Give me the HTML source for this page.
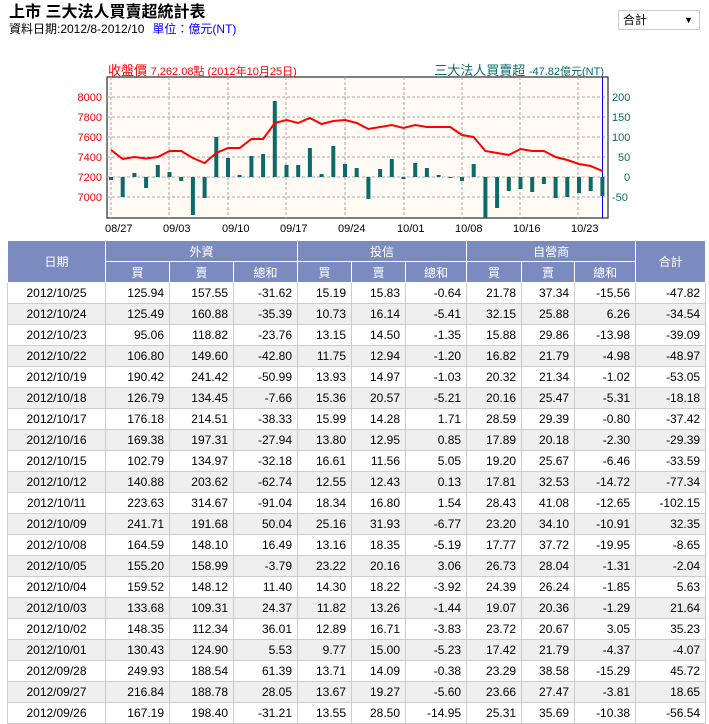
<!DOCTYPE html><html><head><meta charset="utf-8"><style>
body{margin:0;width:709px;height:722px;overflow:hidden;background:#fff;font-family:"Liberation Sans","Noto Sans CJK TC",sans-serif;font-size:12px;color:#000;position:relative}
.t{position:absolute;left:9px;top:3px;font-size:16px;line-height:20px;font-weight:bold}
.s{position:absolute;left:9px;top:22px;font-size:12px;line-height:15px}
.s span{color:#00f;margin-left:8px}
.sel{position:absolute;left:618px;top:10px;width:82px;height:20px;border:1px solid #ccc;box-sizing:border-box;font-size:12px;line-height:18px;padding-left:4px}
.sel i{position:absolute;right:6px;top:0;font-style:normal;font-size:9px}
svg{position:absolute;left:0;top:0}
table{position:absolute;left:7px;top:240px;border-collapse:collapse;width:698px;table-layout:fixed}
td,th{border:1px solid #ccc;height:20px;padding:0 5px 0 0;font-weight:normal;font-size:12px}
th{background:#7b8bc0;color:#fff;text-align:center;padding:0;border-color:#fff}
td{text-align:right}
td:first-child{text-align:center;padding:0}
tr.a td{background:#efefef}
</style></head><body>
<div class="t">上市 三大法人買賣超統計表</div>
<div class="s">資料日期:2012/8-2012/10<span>單位：億元(NT)</span></div>
<div class="sel">合計<i>▼</i></div>
<svg width="709" height="240" font-family="Liberation Sans,Noto Sans CJK TC,sans-serif">
<rect x="107" y="77" width="501" height="141" fill="#fffaf3" stroke="#000"/>
<g stroke="#aaa" stroke-dasharray="3,2">
<line x1="107" x2="608" y1="97" y2="97"/><line x1="107" x2="608" y1="117" y2="117"/><line x1="107" x2="608" y1="137" y2="137"/><line x1="107" x2="608" y1="157" y2="157"/><line x1="107" x2="608" y1="177" y2="177"/><line x1="107" x2="608" y1="197" y2="197"/>
<line x1="111" x2="111" y1="77" y2="218"/><line x1="169" x2="169" y1="77" y2="218"/><line x1="228" x2="228" y1="77" y2="218"/><line x1="286" x2="286" y1="77" y2="218"/><line x1="345" x2="345" y1="77" y2="218"/><line x1="404" x2="404" y1="77" y2="218"/><line x1="462" x2="462" y1="77" y2="218"/><line x1="520" x2="520" y1="77" y2="218"/><line x1="578" x2="578" y1="77" y2="218"/>
</g>
<line x1="602.5" x2="602.5" y1="77" y2="218" stroke="#00f"/>
<g fill="#0b6b68">
<rect x="109" y="177" width="4" height="3"/><rect x="120.7" y="177" width="4" height="20"/><rect x="132.4" y="173" width="4" height="4"/><rect x="144.1" y="177" width="4" height="11"/><rect x="155.8" y="165" width="4" height="12"/><rect x="167.5" y="172" width="4" height="5"/><rect x="179.2" y="177" width="4" height="4"/><rect x="190.9" y="177" width="4" height="38"/><rect x="202.6" y="177" width="4" height="21"/><rect x="214.3" y="137" width="4" height="40"/><rect x="226" y="158" width="4" height="19"/><rect x="237.7" y="175" width="4" height="2"/><rect x="249.4" y="156" width="4" height="21"/><rect x="261.1" y="154" width="4" height="23"/><rect x="272.8" y="101" width="4" height="76"/><rect x="284.5" y="165" width="4" height="12"/><rect x="296.2" y="165" width="4" height="12"/><rect x="307.9" y="148" width="4" height="29"/><rect x="319.6" y="174" width="4" height="3"/><rect x="331.3" y="146" width="4" height="31"/><rect x="343" y="164" width="4" height="13"/><rect x="354.7" y="168" width="4" height="9"/><rect x="366.4" y="177" width="4" height="22"/><rect x="378.1" y="169" width="4" height="8"/><rect x="389.8" y="159" width="4" height="18"/><rect x="401.5" y="177" width="4" height="2"/><rect x="413.2" y="163" width="4" height="14"/><rect x="424.9" y="168" width="4" height="9"/><rect x="436.6" y="175" width="4" height="2"/><rect x="448.3" y="177" width="4" height="1"/><rect x="460" y="177" width="4" height="4"/><rect x="471.7" y="164" width="4" height="13"/><rect x="483.4" y="177" width="4" height="41"/><rect x="495.1" y="177" width="4" height="31"/><rect x="506.8" y="177" width="4" height="14"/><rect x="518.5" y="177" width="4" height="12"/><rect x="530.2" y="177" width="4" height="15"/><rect x="541.9" y="177" width="4" height="7"/><rect x="553.6" y="177" width="4" height="21"/><rect x="565.3" y="177" width="4" height="20"/><rect x="577" y="177" width="4" height="16"/><rect x="588.7" y="177" width="4" height="14"/><rect x="600.4" y="177" width="4" height="19"/>
</g>
<polyline fill="none" stroke="#f00" stroke-width="2" points="111,150 122.7,159 134.4,157 146.1,158.5 157.8,157 169.5,151 181.2,151 192.9,158 204.6,163 216.3,153 228,148 239.7,148 251.4,139 263.1,139 274.8,123 286.5,120 298.2,123 309.9,118 321.6,124 333.3,121 345,120 356.7,123 368.4,129 380.1,127 391.8,125 403.5,128 415.2,125 426.9,127 438.6,127 450.3,127 462,135 473.7,137 485.4,151 497.1,153 508.8,155 520.5,149 532.2,151 543.9,151 555.6,157 567.3,160 579,164 590.7,166 602.4,171"/>
<text x="108" y="75" fill="#f00" font-size="13">收盤價 <tspan font-size="11">7,262.08點 (2012年10月25日)</tspan></text>
<text x="604" y="75" fill="#0b6b68" font-size="13" text-anchor="end">三大法人買賣超 <tspan font-size="11">-47.82億元(NT)</tspan></text>
<g fill="#f00" font-size="11" text-anchor="end"><text x="102" y="101">8000</text><text x="102" y="121">7800</text><text x="102" y="141">7600</text><text x="102" y="161">7400</text><text x="102" y="181">7200</text><text x="102" y="201">7000</text></g>
<g fill="#0b6b68" font-size="11"><text x="612" y="101">200</text><text x="612" y="121">150</text><text x="612" y="141">100</text><text x="618" y="161">50</text><text x="624" y="181">0</text><text x="612" y="201">-50</text></g>
<g font-size="11"><text x="105" y="232">08/27</text><text x="163" y="232">09/03</text><text x="222" y="232">09/10</text><text x="280" y="232">09/17</text><text x="338" y="232">09/24</text><text x="397" y="232">10/01</text><text x="455" y="232">10/08</text><text x="513" y="232">10/16</text><text x="571" y="232">10/23</text></g>
</svg>
<table>
<colgroup><col style="width:98px"><col style="width:64px"><col style="width:64px"><col style="width:64px"><col style="width:54px"><col style="width:54px"><col style="width:61px"><col style="width:55px"><col style="width:53px"><col style="width:61px"><col style="width:70px"></colgroup>
<tr><th rowspan="2">日期</th><th colspan="3">外資</th><th colspan="3">投信</th><th colspan="3">自營商</th><th rowspan="2">合計</th></tr>
<tr><th>買</th><th>賣</th><th>總和</th><th>買</th><th>賣</th><th>總和</th><th>買</th><th>賣</th><th>總和</th></tr>
<tr><td>2012/10/25</td><td>125.94</td><td>157.55</td><td>-31.62</td><td>15.19</td><td>15.83</td><td>-0.64</td><td>21.78</td><td>37.34</td><td>-15.56</td><td>-47.82</td></tr>
<tr class="a"><td>2012/10/24</td><td>125.49</td><td>160.88</td><td>-35.39</td><td>10.73</td><td>16.14</td><td>-5.41</td><td>32.15</td><td>25.88</td><td>6.26</td><td>-34.54</td></tr>
<tr><td>2012/10/23</td><td>95.06</td><td>118.82</td><td>-23.76</td><td>13.15</td><td>14.50</td><td>-1.35</td><td>15.88</td><td>29.86</td><td>-13.98</td><td>-39.09</td></tr>
<tr class="a"><td>2012/10/22</td><td>106.80</td><td>149.60</td><td>-42.80</td><td>11.75</td><td>12.94</td><td>-1.20</td><td>16.82</td><td>21.79</td><td>-4.98</td><td>-48.97</td></tr>
<tr><td>2012/10/19</td><td>190.42</td><td>241.42</td><td>-50.99</td><td>13.93</td><td>14.97</td><td>-1.03</td><td>20.32</td><td>21.34</td><td>-1.02</td><td>-53.05</td></tr>
<tr class="a"><td>2012/10/18</td><td>126.79</td><td>134.45</td><td>-7.66</td><td>15.36</td><td>20.57</td><td>-5.21</td><td>20.16</td><td>25.47</td><td>-5.31</td><td>-18.18</td></tr>
<tr><td>2012/10/17</td><td>176.18</td><td>214.51</td><td>-38.33</td><td>15.99</td><td>14.28</td><td>1.71</td><td>28.59</td><td>29.39</td><td>-0.80</td><td>-37.42</td></tr>
<tr class="a"><td>2012/10/16</td><td>169.38</td><td>197.31</td><td>-27.94</td><td>13.80</td><td>12.95</td><td>0.85</td><td>17.89</td><td>20.18</td><td>-2.30</td><td>-29.39</td></tr>
<tr><td>2012/10/15</td><td>102.79</td><td>134.97</td><td>-32.18</td><td>16.61</td><td>11.56</td><td>5.05</td><td>19.20</td><td>25.67</td><td>-6.46</td><td>-33.59</td></tr>
<tr class="a"><td>2012/10/12</td><td>140.88</td><td>203.62</td><td>-62.74</td><td>12.55</td><td>12.43</td><td>0.13</td><td>17.81</td><td>32.53</td><td>-14.72</td><td>-77.34</td></tr>
<tr><td>2012/10/11</td><td>223.63</td><td>314.67</td><td>-91.04</td><td>18.34</td><td>16.80</td><td>1.54</td><td>28.43</td><td>41.08</td><td>-12.65</td><td>-102.15</td></tr>
<tr class="a"><td>2012/10/09</td><td>241.71</td><td>191.68</td><td>50.04</td><td>25.16</td><td>31.93</td><td>-6.77</td><td>23.20</td><td>34.10</td><td>-10.91</td><td>32.35</td></tr>
<tr><td>2012/10/08</td><td>164.59</td><td>148.10</td><td>16.49</td><td>13.16</td><td>18.35</td><td>-5.19</td><td>17.77</td><td>37.72</td><td>-19.95</td><td>-8.65</td></tr>
<tr class="a"><td>2012/10/05</td><td>155.20</td><td>158.99</td><td>-3.79</td><td>23.22</td><td>20.16</td><td>3.06</td><td>26.73</td><td>28.04</td><td>-1.31</td><td>-2.04</td></tr>
<tr><td>2012/10/04</td><td>159.52</td><td>148.12</td><td>11.40</td><td>14.30</td><td>18.22</td><td>-3.92</td><td>24.39</td><td>26.24</td><td>-1.85</td><td>5.63</td></tr>
<tr class="a"><td>2012/10/03</td><td>133.68</td><td>109.31</td><td>24.37</td><td>11.82</td><td>13.26</td><td>-1.44</td><td>19.07</td><td>20.36</td><td>-1.29</td><td>21.64</td></tr>
<tr><td>2012/10/02</td><td>148.35</td><td>112.34</td><td>36.01</td><td>12.89</td><td>16.71</td><td>-3.83</td><td>23.72</td><td>20.67</td><td>3.05</td><td>35.23</td></tr>
<tr class="a"><td>2012/10/01</td><td>130.43</td><td>124.90</td><td>5.53</td><td>9.77</td><td>15.00</td><td>-5.23</td><td>17.42</td><td>21.79</td><td>-4.37</td><td>-4.07</td></tr>
<tr><td>2012/09/28</td><td>249.93</td><td>188.54</td><td>61.39</td><td>13.71</td><td>14.09</td><td>-0.38</td><td>23.29</td><td>38.58</td><td>-15.29</td><td>45.72</td></tr>
<tr class="a"><td>2012/09/27</td><td>216.84</td><td>188.78</td><td>28.05</td><td>13.67</td><td>19.27</td><td>-5.60</td><td>23.66</td><td>27.47</td><td>-3.81</td><td>18.65</td></tr>
<tr><td>2012/09/26</td><td>167.19</td><td>198.40</td><td>-31.21</td><td>13.55</td><td>28.50</td><td>-14.95</td><td>25.31</td><td>35.69</td><td>-10.38</td><td>-56.54</td></tr>
</table>
</body></html>
